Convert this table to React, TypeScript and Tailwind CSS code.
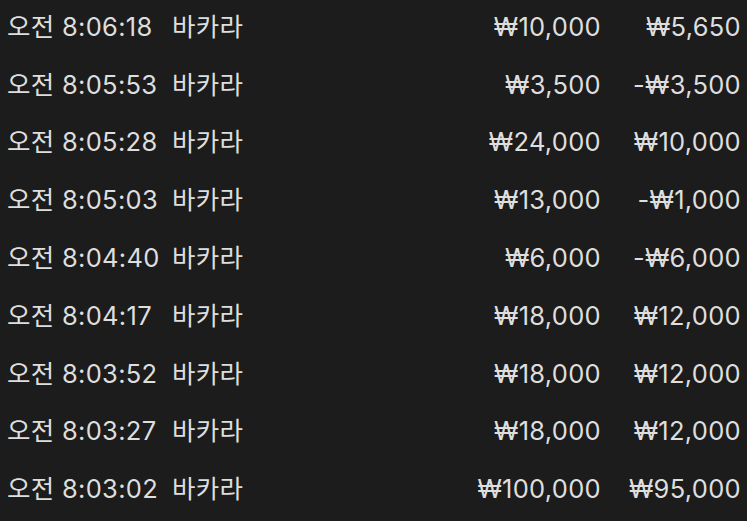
const rows = [
    ["오전 8:06:18", "₩10,000", "₩5,650"],
    ["오전 8:05:53", "₩3,500", "-₩3,500"],
    ["오전 8:05:28", "₩24,000", "₩10,000"],
    ["오전 8:05:03", "₩13,000", "-₩1,000"],
    ["오전 8:04:40", "₩6,000", "-₩6,000"],
    ["오전 8:04:17", "₩18,000", "₩12,000"],
    ["오전 8:03:52", "₩18,000", "₩12,000"],
    ["오전 8:03:27", "₩18,000", "₩12,000"],
    ["오전 8:03:02", "₩100,000", "₩95,000"],
];

export default function App() {
    return (
        <div
            className="h-[521px] w-[747px] overflow-hidden bg-[#1c1c1c] text-[25.5px] tracking-[0.3px] text-[#dedede]"
            style={{ fontFamily: 'Inter, "Noto Sans CJK KR", sans-serif' }}
        >
            <div className="-mt-[2px] flex flex-col">
                {rows.map(([time, bet, result], i) => (
                    <div key={i} className="flex h-[57.8px] items-center pl-[7px] pr-[6px]">
                        <span className="w-[165px] shrink-0">{time}</span>
                        <span>바카라</span>
                        <span className="ml-auto">{bet}</span>
                        <span className="w-[140px] text-right">{result}</span>
                    </div>
                ))}
            </div>
        </div>
    );
}
